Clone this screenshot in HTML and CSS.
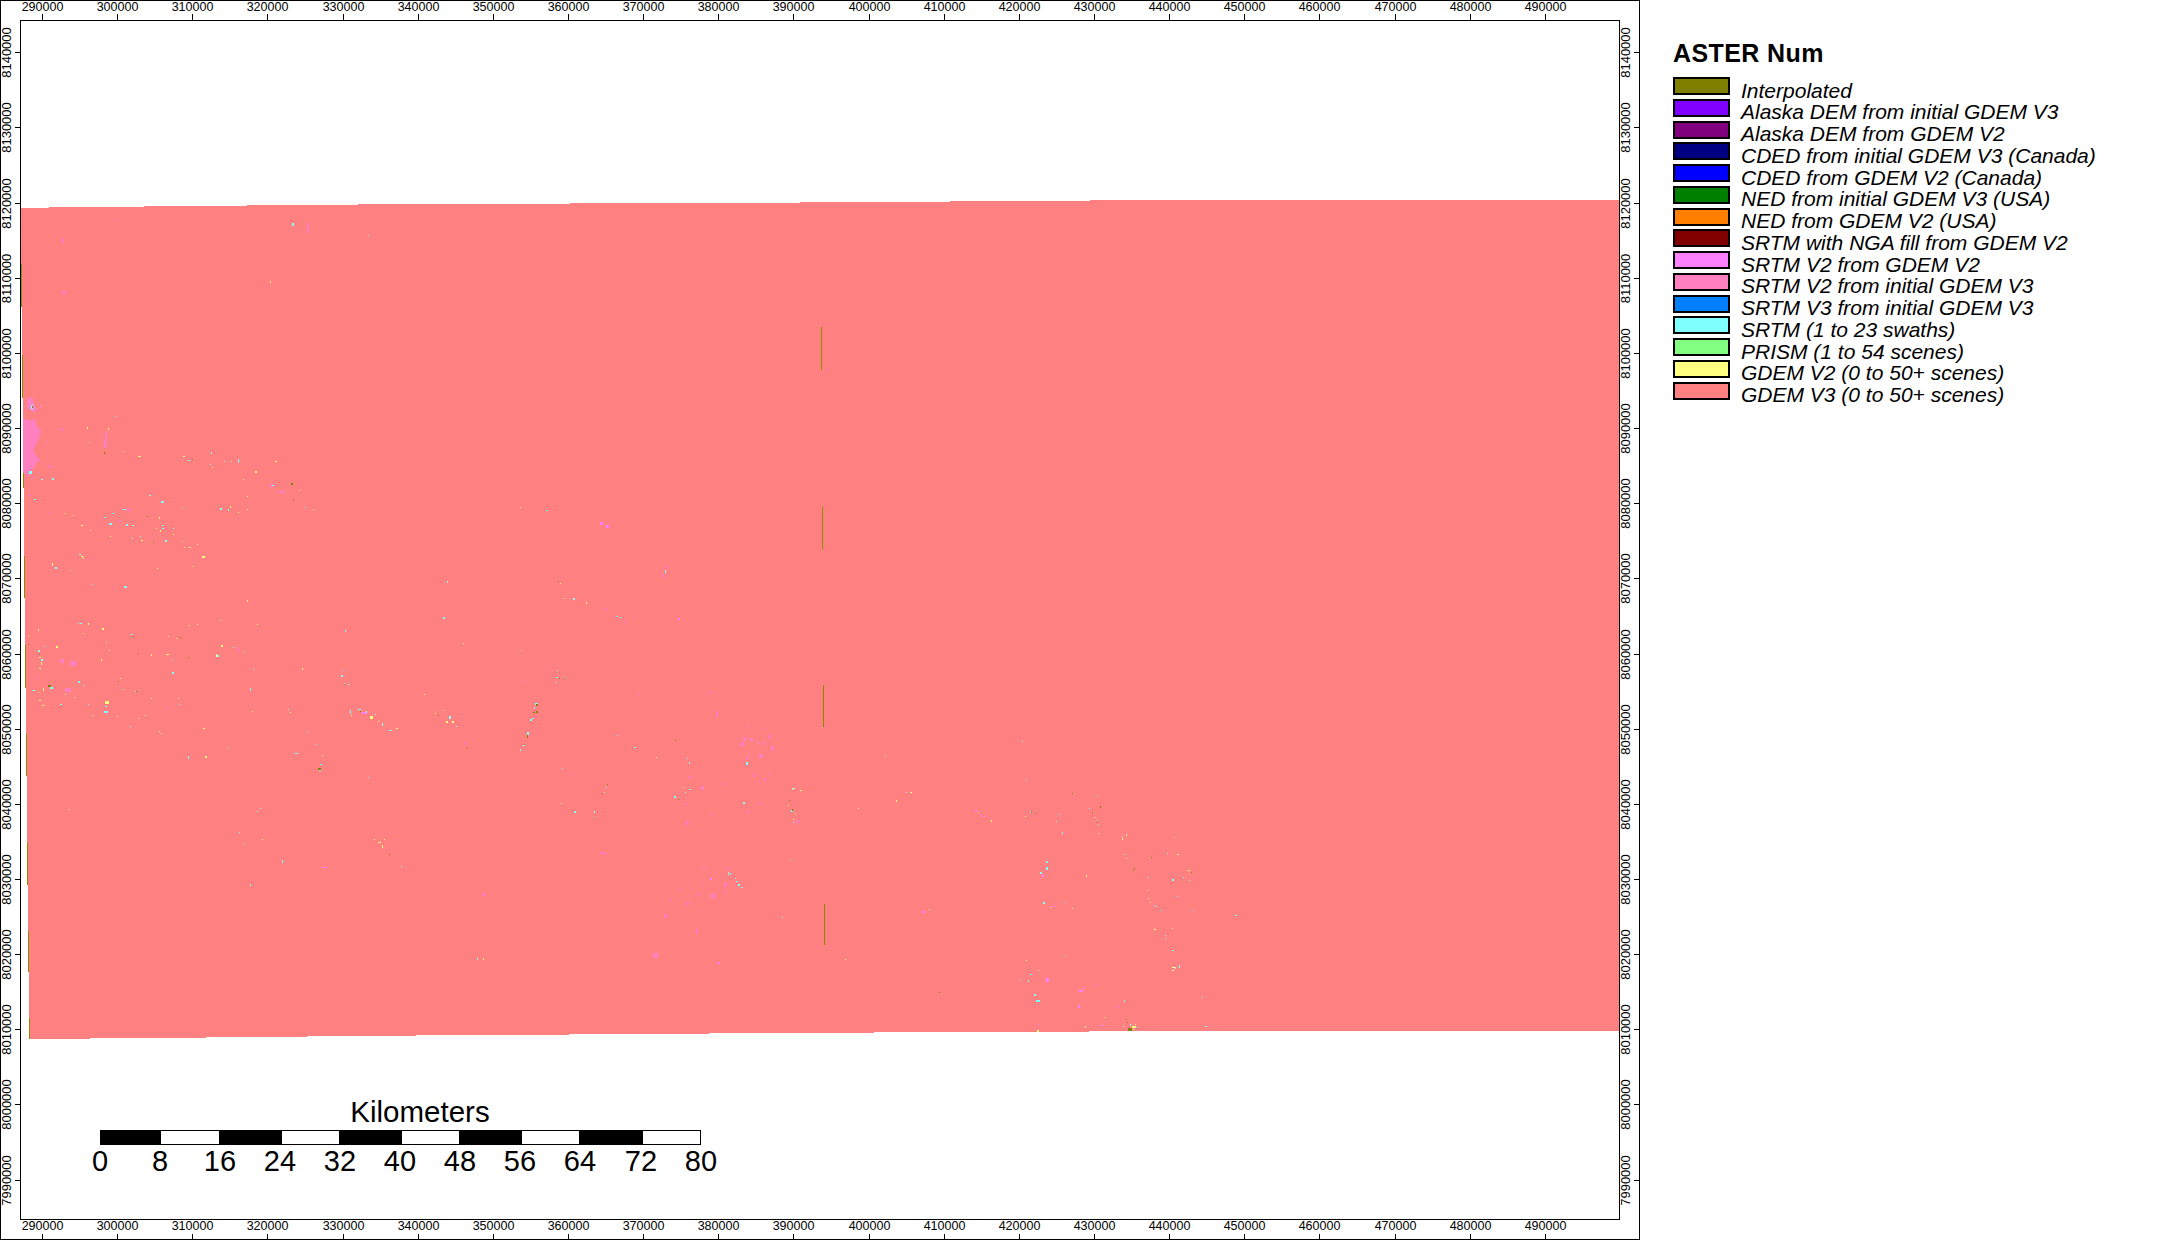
FILE: index.html
```html
<!DOCTYPE html>
<html lang="en">
<head>
<meta charset="utf-8">
<title>ASTER Num</title>
<link rel="stylesheet" href="styles.css">
</head>
<body>
<main class="page">
<svg class="map" width="1640" height="1240" viewBox="0 0 1640 1240" xmlns="http://www.w3.org/2000/svg">
  <polygon class="raster" points="21,208 49,208 49,207 144,207 144,206 247,206 247,205 358,205 358,204 570,204 570,203 800,203 800,202 950,202 950,201 1090,201 1090,200 1619,200 1619,1031 1089,1031 1089,1032 874,1032 874,1033 709,1033 709,1034 569,1034 569,1035 416,1035 416,1036 307,1036 307,1037 206,1037 206,1038 90,1038 90,1039 29,1039 29,972 28,972 28,885 27,885 27,776 26,776 26,688 25,688 25,598 24,598 24,488 23,488 23,398 22,398 22,307 21,307"/>

  <path class="olive" d="M21 264h1v43h-1zM22 355h1v43h-1zM23 445h1v43h-1zM24 556h1v42h-1zM25 645h1v43h-1zM26 734h1v42h-1zM27 843h1v42h-1zM28 931h1v41h-1zM29 1018h1v21h-1zM821 327h1v43h-1zM822 507h1v42h-1zM823 685h1v42h-1zM824 904h1v41h-1z"/>

  <polygon class="pink" points="23,418 28,420 35,419 38,428 41,431 39,438 36,445 33,452 38,457 40,462 36,462 35,468 28,472 30,477 24,473 23,473"/>
  <polygon class="pink" points="27,398 33,398 34,404 38,410 32,412 29,408 27,410"/>

  <path class="pink" d="M60 428h3v3h-3zM49 465h3v3h-3zM40 405h2v2h-2zM105 432h2v16h-2zM104 440h2v8h-2zM62 238h2v5h-2zM62 291h4v3h-4zM307 223h2v10h-2zM270 484h3v3h-3zM278 491h7v2h-7zM60 659h4v4h-4zM70 661h6v5h-6zM65 688h6v4h-6zM36 677h1v3h-1zM127 509h4v2h-4zM119 520h2v2h-2zM32 477h3v1h-3zM42 526h1v1h-1zM653 953h5v5h-5zM696 929h2v4h-2zM664 914h3v4h-3zM679 889h2v1h-2zM670 899h2v2h-2zM686 902h3v3h-3zM711 893h4v6h-4zM724 883h3v4h-3zM725 890h1v3h-1zM700 885h1v2h-1zM703 882h1v1h-1zM703 867h2v2h-2zM727 868h2v2h-2zM709 691h2v3h-2zM716 711h2v6h-2zM747 725h2v2h-2zM764 728h2v1h-2zM768 735h3v3h-3zM743 737h3v4h-3zM749 738h4v3h-4zM757 741h2v3h-2zM763 742h2v3h-2zM771 746h3v5h-3zM741 742h3v4h-3zM739 744h2v1h-2zM748 754h2v2h-2zM746 757h2v3h-2zM759 754h4v4h-4zM753 774h2v3h-2zM768 773h1v2h-1zM764 778h2v3h-2zM689 776h3v2h-3zM701 786h3v4h-3zM723 783h3v2h-3zM759 802h2v2h-2zM747 810h2v3h-2zM686 821h3v4h-3zM711 814h1v2h-1zM796 820h3v3h-3zM464 742h2v3h-2zM483 893h3v3h-3zM600 852h4v2h-4zM605 853h2v2h-2zM570 773h1v2h-1z"/>

  <path class="magenta" d="M116 220h1v1h-1zM29 495h2v1h-2zM47 441h1v1h-1zM48 512h1v1h-1zM237 650h2v1h-2zM236 647h1v1h-1zM239 648h1v1h-1zM166 708h2v1h-2zM322 867h5v1h-5zM362 712h5v2h-5zM600 522h3v3h-3zM606 525h3v3h-3zM666 567h2v1h-2zM663 574h1v3h-1zM605 609h2v1h-2zM625 621h1v2h-1zM678 618h2v2h-2zM549 666h1v1h-1zM522 681h1v1h-1zM639 693h1v1h-1zM718 962h2v2h-2zM698 894h2v1h-2zM710 878h2v2h-2zM685 804h2v1h-2zM975 810h2v2h-2zM980 814h2v1h-2zM983 816h2v1h-2zM923 911h3v2h-3zM1052 906h3v1h-3zM1042 875h2v2h-2zM1046 978h3v4h-3zM1079 990h4v2h-4zM1082 988h2v1h-2zM1097 984h1v1h-1zM1078 1005h2v3h-2zM1117 1006h1v2h-1zM1100 1025h3v1h-3zM1038 1024h1v1h-1z"/>

  <path class="cyan" d="M292 223h2v3h-2zM368 235h1v1h-1zM31 405h2v4h-2zM115 416h1v1h-1zM89 442h1v1h-1zM211 452h1v2h-1zM188 460h2v1h-2zM210 464h1v1h-1zM231 461h1v1h-1zM238 459h1v4h-1zM224 461h1v1h-1zM29 471h3v3h-3zM52 478h2v2h-2zM41 479h2v1h-2zM34 499h2v1h-2zM149 495h2v1h-2zM161 501h3v2h-3zM182 507h1v1h-1zM220 508h2v2h-2zM228 509h1v2h-1zM123 509h3v1h-3zM104 517h2v1h-2zM112 513h2v1h-2zM109 523h3v2h-3zM126 524h2v2h-2zM132 525h2v1h-2zM140 536h1v1h-1zM132 538h1v1h-1zM165 540h2v2h-2zM162 525h2v1h-2zM162 528h2v1h-2zM173 528h1v1h-1zM182 541h1v1h-1zM79 554h2v1h-2zM55 567h2v2h-2zM70 570h1v1h-1zM92 584h1v1h-1zM124 586h3v2h-3zM78 623h1v1h-1zM80 623h2v1h-2zM131 634h2v1h-2zM106 642h1v1h-1zM38 650h2v2h-2zM44 646h1v1h-1zM41 659h2v2h-2zM172 660h1v1h-1zM172 672h2v2h-2zM78 681h2v2h-2zM83 685h1v1h-1zM50 687h3v2h-3zM32 690h3v1h-3zM123 689h1v1h-1zM135 691h1v1h-1zM60 704h2v1h-2zM88 704h1v1h-1zM105 706h2v1h-2zM104 711h4v2h-4zM179 704h1v1h-1zM130 726h1v1h-1zM217 655h2v2h-2zM233 647h1v1h-1zM244 652h1v1h-1zM253 669h1v1h-1zM250 688h1v3h-1zM288 709h1v1h-1zM272 485h2v1h-2zM188 756h1v3h-1zM228 748h1v1h-1zM295 753h3v1h-3zM316 744h1v1h-1zM307 732h1v1h-1zM350 710h1v4h-1zM358 709h3v1h-3zM366 711h1v2h-1zM375 714h1v1h-1zM382 723h1v3h-1zM389 730h3v1h-3zM320 764h2v1h-2zM319 770h2v1h-2zM368 777h1v1h-1zM260 808h1v1h-1zM257 811h1v1h-1zM239 832h1v1h-1zM244 844h1v1h-1zM282 860h1v3h-1zM250 884h1v2h-1zM305 507h1v1h-1zM546 510h2v1h-2zM665 570h1v3h-1zM447 581h1v2h-1zM573 598h2v2h-2zM616 616h2v1h-2zM620 617h1v1h-1zM443 617h2v2h-2zM345 630h1v2h-1zM521 650h1v1h-1zM342 670h1v1h-1zM341 675h2v2h-2zM344 683h1v1h-1zM348 684h1v1h-1zM557 670h1v1h-1zM556 677h2v1h-2zM564 677h1v1h-1zM556 682h1v1h-1zM535 703h3v2h-3zM534 707h1v2h-1zM530 719h2v2h-2zM532 718h2v1h-2zM527 732h2v3h-2zM523 745h2v1h-2zM520 749h1v2h-1zM449 716h2v3h-2zM456 726h1v1h-1zM477 958h1v2h-1zM401 866h1v1h-1zM562 768h1v1h-1zM574 811h2v2h-2zM594 811h1v2h-1zM594 817h1v1h-1zM606 787h1v1h-1zM604 792h1v1h-1zM617 735h1v1h-1zM634 747h2v1h-2zM728 872h1v3h-1zM730 873h1v2h-1zM735 878h1v1h-1zM736 881h2v1h-2zM738 884h2v2h-2zM741 887h2v1h-2zM790 860h1v1h-1zM782 917h1v1h-1zM746 762h2v3h-2zM743 802h2v2h-2zM687 758h1v1h-1zM689 762h1v2h-1zM689 789h2v1h-2zM685 792h1v1h-1zM674 796h2v2h-2zM792 788h1v2h-1zM791 810h2v2h-2zM793 822h1v1h-1zM885 756h1v1h-1zM1022 741h1v1h-1zM1026 779h1v1h-1zM1097 796h1v1h-1zM906 792h1v1h-1zM1030 812h1v1h-1zM1059 814h1v1h-1zM1056 821h1v1h-1zM1062 832h1v2h-1zM1089 808h1v1h-1zM1096 820h1v1h-1zM1098 824h1v1h-1zM1122 836h1v1h-1zM1174 837h1v1h-1zM1124 854h1v1h-1zM1167 853h1v1h-1zM1148 877h1v1h-1zM1172 879h2v2h-2zM1183 877h1v1h-1zM1189 880h1v1h-1zM1177 896h1v1h-1zM1154 905h1v1h-1zM1156 906h1v1h-1zM1161 910h1v1h-1zM1193 910h1v1h-1zM1235 915h2v1h-2zM1165 935h1v1h-1zM1165 938h1v1h-1zM1172 950h2v1h-2zM1179 965h1v3h-1zM1175 967h1v2h-1zM1202 997h1v1h-1zM1205 1026h2v1h-2zM1046 861h2v2h-2zM1046 867h2v3h-2zM1040 872h2v2h-2zM1043 902h2v2h-2zM1065 902h1v1h-1zM1065 956h1v1h-1zM1030 974h2v1h-2zM1020 980h1v1h-1zM1028 980h1v2h-1zM1034 994h2v2h-2zM1036 1000h4v2h-4zM1124 1000h1v2h-1zM1085 1026h1v1h-1zM1130 1024h1v2h-1zM1137 1027h1v1h-1zM1123 1026h1v1h-1z"/>

  <path class="yellow" d="M270 281h1v2h-1zM108 428h1v2h-1zM87 427h1v2h-1zM123 451h1v1h-1zM138 456h3v1h-3zM183 456h2v1h-2zM212 467h1v1h-1zM275 461h2v1h-2zM255 471h2v2h-2zM243 479h1v1h-1zM247 496h1v1h-1zM230 506h1v2h-1zM238 512h1v1h-1zM247 509h1v1h-1zM65 513h1v1h-1zM73 515h1v1h-1zM81 525h2v1h-2zM90 530h1v1h-1zM110 536h1v1h-1zM159 517h1v2h-1zM156 528h1v1h-1zM160 530h1v2h-1zM141 540h2v1h-2zM189 547h2v1h-2zM184 547h1v1h-1zM197 544h1v1h-1zM202 556h3v2h-3zM173 534h1v1h-1zM52 563h1v3h-1zM81 556h2v1h-2zM83 557h1v2h-1zM157 568h1v1h-1zM193 566h1v1h-1zM247 600h1v2h-1zM220 620h1v1h-1zM257 624h1v1h-1zM197 624h1v1h-1zM189 625h1v1h-1zM88 623h1v2h-1zM102 628h2v2h-2zM38 629h1v2h-1zM83 633h1v1h-1zM28 636h1v1h-1zM168 636h1v1h-1zM176 638h1v1h-1zM56 646h2v2h-2zM221 645h2v2h-2zM216 654h1v3h-1zM166 654h3v1h-3zM151 654h1v2h-1zM109 650h1v1h-1zM101 659h1v2h-1zM39 657h2v1h-2zM41 662h1v3h-1zM39 668h2v1h-2zM120 678h1v1h-1zM43 688h1v3h-1zM74 697h1v1h-1zM65 694h1v1h-1zM151 698h1v1h-1zM178 698h1v1h-1zM105 701h4v3h-4zM39 700h2v1h-2zM42 705h2v1h-2zM38 692h1v1h-1zM34 690h1v1h-1zM92 715h1v1h-1zM117 716h1v1h-1zM138 718h1v1h-1zM145 715h1v1h-1zM203 728h2v1h-2zM252 711h1v1h-1zM290 712h1v1h-1zM299 490h1v1h-1zM205 756h2v2h-2zM322 755h1v1h-1zM69 809h1v1h-1zM262 839h1v1h-1zM384 839h1v1h-1zM378 842h3v1h-3zM382 845h1v3h-1zM374 839h1v1h-1zM396 728h2v1h-2zM370 716h3v3h-3zM378 721h1v1h-1zM351 715h1v1h-1zM159 731h1v1h-1zM161 733h1v1h-1zM313 509h1v1h-1zM520 507h1v1h-1zM560 583h1v1h-1zM564 598h1v1h-1zM586 602h1v2h-1zM463 643h1v1h-1zM302 668h1v2h-1zM424 694h1v1h-1zM446 721h2v2h-2zM452 721h2v2h-2zM443 710h1v1h-1zM435 713h1v1h-1zM561 803h1v1h-1zM656 757h1v1h-1zM483 958h1v2h-1zM683 787h1v1h-1zM793 788h2v1h-2zM788 805h1v1h-1zM795 813h1v1h-1zM793 819h1v1h-1zM800 790h2v1h-2zM910 792h2v1h-2zM896 800h1v2h-1zM858 808h1v1h-1zM978 812h1v1h-1zM991 820h1v2h-1zM1025 816h1v1h-1zM1094 817h1v1h-1zM1098 833h1v1h-1zM1122 838h1v2h-1zM1126 834h1v2h-1zM1126 858h1v1h-1zM1177 854h2v1h-2zM1188 870h2v1h-2zM1147 890h1v1h-1zM1148 898h1v1h-1zM1150 902h1v1h-1zM1154 929h2v1h-2zM1172 928h1v1h-1zM1172 967h3v1h-3zM1172 970h2v1h-2zM1086 875h1v2h-1zM1072 908h1v1h-1zM1050 907h1v1h-1zM929 909h1v1h-1zM845 959h1v1h-1zM1026 960h1v1h-1zM1038 970h1v1h-1zM1085 1027h1v1h-1zM1037 1030h2v2h-2zM1105 1017h1v1h-1zM1132 1026h4v2h-4zM1135 1024h1v1h-1zM1133 1029h1v1h-1z"/>

  <path class="dark" d="M32 406h1v2h-1zM104 452h1v2h-1zM192 459h1v1h-1zM291 483h2v2h-2zM293 500h1v1h-1zM147 516h1v1h-1zM153 542h1v1h-1zM133 637h1v1h-1zM180 637h1v1h-1zM138 653h1v1h-1zM188 657h1v1h-1zM28 644h1v1h-1zM48 685h3v2h-3zM118 681h1v1h-1zM136 691h1v1h-1zM39 654h1v1h-1zM318 768h3v2h-3zM389 854h1v1h-1zM360 711h1v1h-1zM558 581h1v1h-1zM344 684h1v1h-1zM559 678h1v1h-1zM564 678h1v1h-1zM536 704h2v2h-2zM536 711h2v2h-2zM533 712h2v1h-2zM527 735h1v3h-1zM524 744h1v1h-1zM438 715h1v1h-1zM467 748h1v1h-1zM573 810h1v1h-1zM594 818h1v1h-1zM607 784h1v1h-1zM602 793h1v1h-1zM675 740h1v1h-1zM678 799h1v1h-1zM789 800h1v1h-1zM792 809h1v2h-1zM1072 793h1v1h-1zM1031 812h1v1h-1zM1035 813h1v1h-1zM1092 812h1v1h-1zM1100 806h1v2h-1zM1096 821h1v1h-1zM1151 857h1v1h-1zM1134 868h1v1h-1zM1133 870h1v1h-1zM1191 872h1v1h-1zM939 992h1v1h-1zM1128 1028h4v3h-4zM1126 1019h1v1h-1zM1127 1022h1v1h-1zM1137 1028h1v1h-1z"/>

  <g class="axis">
    <rect x="20" y="20" width="1600" height="1200" class="frame"/>
    <rect x="0.5" y="0.5" width="1639" height="1239" class="frame"/>
  </g>
  <path class="ticks" d="M42 14h1v6h-1zM117 14h1v6h-1zM192 14h1v6h-1zM267 14h1v6h-1zM343 14h1v6h-1zM418 14h1v6h-1zM493 14h1v6h-1zM568 14h1v6h-1zM643 14h1v6h-1zM718 14h1v6h-1zM793 14h1v6h-1zM869 14h1v6h-1zM944 14h1v6h-1zM1019 14h1v6h-1zM1094 14h1v6h-1zM1169 14h1v6h-1zM1244 14h1v6h-1zM1319 14h1v6h-1zM1395 14h1v6h-1zM1470 14h1v6h-1zM1545 14h1v6h-1zM42 1234h1v6h-1zM117 1234h1v6h-1zM192 1234h1v6h-1zM267 1234h1v6h-1zM343 1234h1v6h-1zM418 1234h1v6h-1zM493 1234h1v6h-1zM568 1234h1v6h-1zM643 1234h1v6h-1zM718 1234h1v6h-1zM793 1234h1v6h-1zM869 1234h1v6h-1zM944 1234h1v6h-1zM1019 1234h1v6h-1zM1094 1234h1v6h-1zM1169 1234h1v6h-1zM1244 1234h1v6h-1zM1319 1234h1v6h-1zM1395 1234h1v6h-1zM1470 1234h1v6h-1zM1545 1234h1v6h-1zM15 52h6v1h-6zM15 127h6v1h-6zM15 203h6v1h-6zM15 278h6v1h-6zM15 353h6v1h-6zM15 428h6v1h-6zM15 503h6v1h-6zM15 578h6v1h-6zM15 654h6v1h-6zM15 729h6v1h-6zM15 804h6v1h-6zM15 879h6v1h-6zM15 954h6v1h-6zM15 1029h6v1h-6zM15 1104h6v1h-6zM15 1180h6v1h-6zM1634 52h6v1h-6zM1634 127h6v1h-6zM1634 203h6v1h-6zM1634 278h6v1h-6zM1634 353h6v1h-6zM1634 428h6v1h-6zM1634 503h6v1h-6zM1634 578h6v1h-6zM1634 654h6v1h-6zM1634 729h6v1h-6zM1634 804h6v1h-6zM1634 879h6v1h-6zM1634 954h6v1h-6zM1634 1029h6v1h-6zM1634 1104h6v1h-6zM1634 1180h6v1h-6z"/>

  <g class="tick-label">
    <text x="42.5" y="11">290000</text><text x="117.5" y="11">300000</text><text x="192.5" y="11">310000</text><text x="267.5" y="11">320000</text><text x="343.5" y="11">330000</text><text x="418.5" y="11">340000</text><text x="493.5" y="11">350000</text><text x="568.5" y="11">360000</text><text x="643.5" y="11">370000</text><text x="718.5" y="11">380000</text><text x="793.5" y="11">390000</text><text x="869.5" y="11">400000</text><text x="944.5" y="11">410000</text><text x="1019.5" y="11">420000</text><text x="1094.5" y="11">430000</text><text x="1169.5" y="11">440000</text><text x="1244.5" y="11">450000</text><text x="1319.5" y="11">460000</text><text x="1395.5" y="11">470000</text><text x="1470.5" y="11">480000</text><text x="1545.5" y="11">490000</text>
    <text x="42.5" y="1230">290000</text><text x="117.5" y="1230">300000</text><text x="192.5" y="1230">310000</text><text x="267.5" y="1230">320000</text><text x="343.5" y="1230">330000</text><text x="418.5" y="1230">340000</text><text x="493.5" y="1230">350000</text><text x="568.5" y="1230">360000</text><text x="643.5" y="1230">370000</text><text x="718.5" y="1230">380000</text><text x="793.5" y="1230">390000</text><text x="869.5" y="1230">400000</text><text x="944.5" y="1230">410000</text><text x="1019.5" y="1230">420000</text><text x="1094.5" y="1230">430000</text><text x="1169.5" y="1230">440000</text><text x="1244.5" y="1230">450000</text><text x="1319.5" y="1230">460000</text><text x="1395.5" y="1230">470000</text><text x="1470.5" y="1230">480000</text><text x="1545.5" y="1230">490000</text>
  </g>
  <g class="tick-label-v">
    <text transform="translate(11 52.5) rotate(-90)">8140000</text><text transform="translate(11 127.5) rotate(-90)">8130000</text><text transform="translate(11 203.5) rotate(-90)">8120000</text><text transform="translate(11 278.5) rotate(-90)">8110000</text><text transform="translate(11 353.5) rotate(-90)">8100000</text><text transform="translate(11 428.5) rotate(-90)">8090000</text><text transform="translate(11 503.5) rotate(-90)">8080000</text><text transform="translate(11 578.5) rotate(-90)">8070000</text><text transform="translate(11 654.5) rotate(-90)">8060000</text><text transform="translate(11 729.5) rotate(-90)">8050000</text><text transform="translate(11 804.5) rotate(-90)">8040000</text><text transform="translate(11 879.5) rotate(-90)">8030000</text><text transform="translate(11 954.5) rotate(-90)">8020000</text><text transform="translate(11 1029.5) rotate(-90)">8010000</text><text transform="translate(11 1104.5) rotate(-90)">8000000</text><text transform="translate(11 1180.5) rotate(-90)">7990000</text>
    <text transform="translate(1630 52.5) rotate(-90)">8140000</text><text transform="translate(1630 127.5) rotate(-90)">8130000</text><text transform="translate(1630 203.5) rotate(-90)">8120000</text><text transform="translate(1630 278.5) rotate(-90)">8110000</text><text transform="translate(1630 353.5) rotate(-90)">8100000</text><text transform="translate(1630 428.5) rotate(-90)">8090000</text><text transform="translate(1630 503.5) rotate(-90)">8080000</text><text transform="translate(1630 578.5) rotate(-90)">8070000</text><text transform="translate(1630 654.5) rotate(-90)">8060000</text><text transform="translate(1630 729.5) rotate(-90)">8050000</text><text transform="translate(1630 804.5) rotate(-90)">8040000</text><text transform="translate(1630 879.5) rotate(-90)">8030000</text><text transform="translate(1630 954.5) rotate(-90)">8020000</text><text transform="translate(1630 1029.5) rotate(-90)">8010000</text><text transform="translate(1630 1104.5) rotate(-90)">8000000</text><text transform="translate(1630 1180.5) rotate(-90)">7990000</text>
  </g>

  <g class="scale">
    <rect class="seg-b" x="100" y="1130" width="60" height="14"/><rect class="seg-w" x="160" y="1130" width="59" height="14"/><rect class="seg-b" x="219" y="1130" width="62" height="14"/><rect class="seg-w" x="281" y="1130" width="58" height="14"/><rect class="seg-b" x="339" y="1130" width="62" height="14"/><rect class="seg-w" x="401" y="1130" width="58" height="14"/><rect class="seg-b" x="459" y="1130" width="62" height="14"/><rect class="seg-w" x="521" y="1130" width="58" height="14"/><rect class="seg-b" x="579" y="1130" width="63" height="14"/><rect class="seg-w" x="642" y="1130" width="58" height="14"/>
    <text class="scale-title" x="420" y="1122">Kilometers</text>
    <g class="scale-num">
      <text x="100" y="1170.5">0</text><text x="160" y="1170.5">8</text><text x="220" y="1170.5">16</text><text x="280" y="1170.5">24</text><text x="340" y="1170.5">32</text><text x="400" y="1170.5">40</text><text x="460" y="1170.5">48</text><text x="520" y="1170.5">56</text><text x="580" y="1170.5">64</text><text x="641" y="1170.5">72</text><text x="701" y="1170.5">80</text>
    </g>
  </g>
</svg>

<aside class="legend">
  <h1 class="legend-title">ASTER Num</h1>
  <ul class="legend-list">
    <li class="legend-row"><span class="swatch c-interp"></span><span class="legend-text">Interpolated</span></li>
    <li class="legend-row"><span class="swatch c-ak3"></span><span class="legend-text">Alaska DEM from initial GDEM V3</span></li>
    <li class="legend-row"><span class="swatch c-ak2"></span><span class="legend-text">Alaska DEM from GDEM V2</span></li>
    <li class="legend-row"><span class="swatch c-cd3"></span><span class="legend-text">CDED from initial GDEM V3 (Canada)</span></li>
    <li class="legend-row"><span class="swatch c-cd2"></span><span class="legend-text">CDED from GDEM V2 (Canada)</span></li>
    <li class="legend-row"><span class="swatch c-ned3"></span><span class="legend-text">NED from initial GDEM V3 (USA)</span></li>
    <li class="legend-row"><span class="swatch c-ned2"></span><span class="legend-text">NED from GDEM V2 (USA)</span></li>
    <li class="legend-row"><span class="swatch c-nga"></span><span class="legend-text">SRTM with NGA fill from GDEM V2</span></li>
    <li class="legend-row"><span class="swatch c-s2g2"></span><span class="legend-text">SRTM V2 from GDEM V2</span></li>
    <li class="legend-row"><span class="swatch c-s2g3"></span><span class="legend-text">SRTM V2 from initial GDEM V3</span></li>
    <li class="legend-row"><span class="swatch c-s3g3"></span><span class="legend-text">SRTM V3 from initial GDEM V3</span></li>
    <li class="legend-row"><span class="swatch c-srtm"></span><span class="legend-text">SRTM (1 to 23 swaths)</span></li>
    <li class="legend-row"><span class="swatch c-prism"></span><span class="legend-text">PRISM (1 to 54 scenes)</span></li>
    <li class="legend-row"><span class="swatch c-g2"></span><span class="legend-text">GDEM V2 (0 to 50+ scenes)</span></li>
    <li class="legend-row"><span class="swatch c-g3"></span><span class="legend-text">GDEM V3 (0 to 50+ scenes)</span></li>
  </ul>
</aside>
</main>
</body>
</html>
```
FILE: styles.css
```css
* { box-sizing: border-box; }
html, body { margin: 0; padding: 0; background: #fff; }
body { width: 2164px; height: 1240px; overflow: hidden; font-family: "Liberation Sans", Arial, sans-serif; color: #000; }
.page { display: flex; width: 2164px; height: 1240px; }

.map { display: block; flex: 0 0 1640px; shape-rendering: crispEdges; }
.raster { fill: #ff8080; }
.olive { fill: #8c8c00; }
.pink { fill: #ff80c0; }
.magenta { fill: #ff80ff; }
.cyan { fill: #80ffff; }
.yellow { fill: #ffff80; }
.dark { fill: #808000; }
.frame { fill: none; stroke: #000; stroke-width: 1; }
.axis rect:first-child { transform: translate(.5px, .5px); width: 1599px; height: 1199px; }
.ticks { fill: #000; }
.tick-label text { font-family: "Liberation Sans", Arial, sans-serif; font-size: 12.5px; text-anchor: middle; fill: #000; }
.tick-label-v text { font-family: "Liberation Sans", Arial, sans-serif; font-size: 13px; text-anchor: middle; fill: #000; }

.seg-b { fill: #000; stroke: #000; stroke-width: 1; }
.seg-w { fill: #fff; stroke: #000; stroke-width: 1; }
.scale-title { font-family: "Liberation Sans", Arial, sans-serif; font-size: 29.5px; text-anchor: middle; fill: #000; }
.scale-num text { font-family: "Liberation Sans", Arial, sans-serif; font-size: 29px; text-anchor: middle; fill: #000; }

.legend { flex: 1; padding: 39px 0 0 33px; }
.legend-title { margin: 0 0 9px; font-size: 25px; line-height: 29px; font-weight: 700; letter-spacing: .4px; white-space: nowrap; }
.legend-list { margin: 0; padding: 0; list-style: none; }
.legend-row { display: flex; align-items: flex-start; gap: 11px; height: 21.76px; }
.swatch { flex: 0 0 57px; height: 18px; border: 2px solid #000; }
.legend-text { font-size: 21px; font-style: italic; line-height: 23px; padding-top: 1.5px; white-space: nowrap; }
.c-interp { background: #808000; }
.c-ak3 { background: #8000ff; }
.c-ak2 { background: #800080; }
.c-cd3 { background: #000080; }
.c-cd2 { background: #0000ff; }
.c-ned3 { background: #008000; }
.c-ned2 { background: #ff8000; }
.c-nga { background: #800000; }
.c-s2g2 { background: #ff80ff; }
.c-s2g3 { background: #ff80c0; }
.c-s3g3 { background: #0080ff; }
.c-srtm { background: #80ffff; }
.c-prism { background: #80ff80; }
.c-g2 { background: #ffff80; }
.c-g3 { background: #ff8080; }
```
